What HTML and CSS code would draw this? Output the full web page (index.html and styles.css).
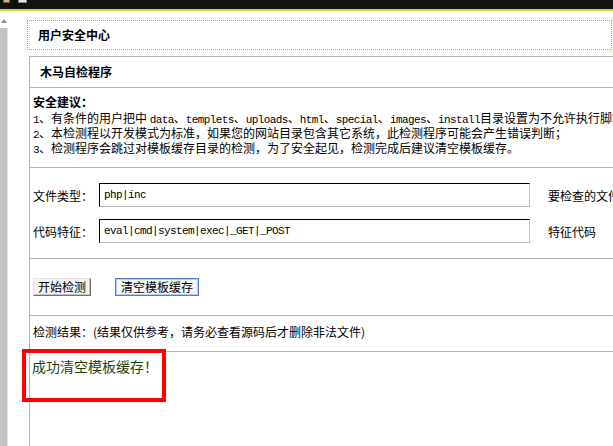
FILE: index.html
```html
<!DOCTYPE html>
<html lang="zh-CN">
<head>
<meta charset="utf-8">
<title>木马自检程序</title>
<link rel="stylesheet" href="styles.css">
</head>
<body>
<div class="topbar"><span class="ico ico-a"></span><span class="ico ico-b"></span></div>
<div class="page">
  <div class="side"><div class="arrow"></div><div class="track"></div></div>
  <div class="main">
    <div class="crumb">用户安全中心</div>
    <div class="panel">
      <div class="row title">木马自检程序</div>
      <div class="row tips">
        <div class="tips-head">安全建议：</div>
        <div class="tip"><span class="mono">1</span>、有条件的用户把中 <span class="mono">data</span>、<span class="mono">templets</span>、<span class="mono">uploads</span>、<span class="mono">html</span>、<span class="mono">special</span>、<span class="mono">images</span>、<span class="mono">install</span>目录设置为不允许执行脚本；</div>
        <div class="tip"><span class="mono">2</span>、本检测程以开发模式为标准，如果您的网站目录包含其它系统，此检测程序可能会产生错误判断；</div>
        <div class="tip"><span class="mono">3</span>、检测程序会跳过对模板缓存目录的检测，为了安全起见，检测完成后建议清空模板缓存。</div>
      </div>
      <div class="row form">
        <div class="field">
          <span class="label">文件类型：</span>
          <input class="text" type="text" value="php|inc">
          <span class="hint">要检查的文件类型</span>
        </div>
        <div class="field">
          <span class="label">代码特征：</span>
          <input class="text" type="text" value="eval|cmd|system|exec|_GET|_POST">
          <span class="hint">特征代码</span>
        </div>
      </div>
      <div class="row btns">
        <button class="btn" type="button">开始检测</button>
        <button class="btn btn-focus" type="button">清空模板缓存</button>
      </div>
      <div class="row result-label">检测结果：(结果仅供参考，请务必查看源码后才删除非法文件)</div>
      <div class="row result">成功清空模板缓存！</div>
    </div>
  </div>
</div>
<div class="mark"></div>
</body>
</html>
```
FILE: styles.css
```css
html, body {
  margin: 0;
  padding: 0;
  background: #fff;
  overflow: hidden;
  height: 446px;
}
body {
  font-family: "Noto Sans CJK SC", "Noto Sans", sans-serif;
  font-size: 12px;
  color: #000;
  position: relative;
}
.topbar {
  height: 9px;
  background: #111313;
  border-bottom: 2px solid #c4e02a;
  display: flex;
  gap: 8px;
  padding-left: 3px;
  align-items: flex-start;
}
.ico {
  display: block;
  height: 3px;
  box-sizing: border-box;
}
.ico-a {
  width: 7px;
  background: #c9b48a;
  border: 1px solid #7a5a30;
  border-top: 0;
}
.ico-b {
  width: 9px;
  background: #e6e6e6;
  border: 1px solid #8a8a8a;
  border-top: 0;
}
.page {
  display: flex;
  height: 435px;
}
.side {
  width: 8px;
  display: flex;
  flex-direction: column;
  flex: none;
}
.arrow {
  margin: 8px 0 0 1px;
  width: 0;
  height: 0;
  border-left: 3px solid transparent;
  border-right: 3px solid transparent;
  border-bottom: 4px solid #8c8c8c;
}
.track {
  margin-top: 5px;
  flex: 1;
  background: #c4c4c4;
  border-right: 1px solid #e2e2e2;
}
.main {
  padding: 9px 0 0 19px;
  display: flex;
  flex-direction: column;
}
.crumb {
  width: 585px;
  height: 30px;
  box-sizing: border-box;
  border: 1px dotted #a0bc0c;
  box-shadow: 0 0 0 3px #f8f8f1;
  font-weight: bold;
  line-height: 28px;
  padding-left: 10px;
}
.panel {
  margin: 6px 0 0 2px;
  width: 640px;
  flex: 1;
  border: 1px solid #b4b4b4;
  border-bottom: 0;
  display: flex;
  flex-direction: column;
}
.row {
  border-bottom: 1px solid #b4b4b4;
}
.title {
  height: 30px;
  line-height: 30px;
  padding-left: 10px;
  font-weight: bold;
}
.tips {
  padding: 6px 0 12px 3px;
  white-space: nowrap;
}
.tips-head {
  font-weight: bold;
  line-height: 16px;
  height: 16px;
}
.tip {
  line-height: 15px;
  height: 15px;
}
.mono {
  font-family: "Liberation Mono", "DejaVu Sans Mono", monospace;
  font-size: 11px;
  letter-spacing: -0.6px;
  line-height: 10px;
}
.form {
  padding: 15px 0 15px 3px;
  display: flex;
  flex-direction: column;
  gap: 12px;
}
.field {
  display: flex;
  align-items: center;
  height: 24px;
}
.label {
  width: 66px;
  flex: none;
}
.text {
  width: 431px;
  height: 24px;
  flex: none;
  box-sizing: border-box;
  margin: 0;
  border: 1px solid;
  border-color: #000 #bdbdbd #bdbdbd #000;
  padding: 0 0 0 4px;
  font-family: "Liberation Mono", "DejaVu Sans Mono", monospace;
  font-size: 11px;
  letter-spacing: -0.6px;
  color: #000;
  background: #fff;
  outline: none;
}
.hint {
  margin-left: 18px;
  white-space: nowrap;
}
.btns {
  padding: 19px 0 19px 3px;
  display: flex;
  gap: 24px;
}
.btn {
  height: 18px;
  margin: 0;
  padding: 0 4px;
  font-family: "Noto Sans CJK SC", sans-serif;
  font-size: 12px;
  line-height: 16px;
  color: #000;
  background: #f2f2f2;
  border: 1px solid;
  border-color: #e4e4e4 #707070 #707070 #e4e4e4;
  box-shadow: inset -1px -1px 0 #c4c4c4;
}
.btn-focus {
  padding: 0 5px;
  background: #f6f6f6;
  border-color: #4f7ad8;
  box-shadow: inset 0 0 0 1px #b9cdf3;
}
.result-label {
  height: 36px;
  box-sizing: border-box;
  padding: 8px 0 0 3px;
  line-height: 16px;
  white-space: nowrap;
}
.result {
  flex: 1;
  border-bottom: 0;
  padding: 4px 0 0 2px;
  line-height: 20px;
  font-size: 14px;
  color: #1f3f14;
}
.mark {
  position: absolute;
  left: 22px;
  top: 349px;
  width: 144px;
  height: 53px;
  box-sizing: border-box;
  border: 4px solid #ff0000;
}
```
